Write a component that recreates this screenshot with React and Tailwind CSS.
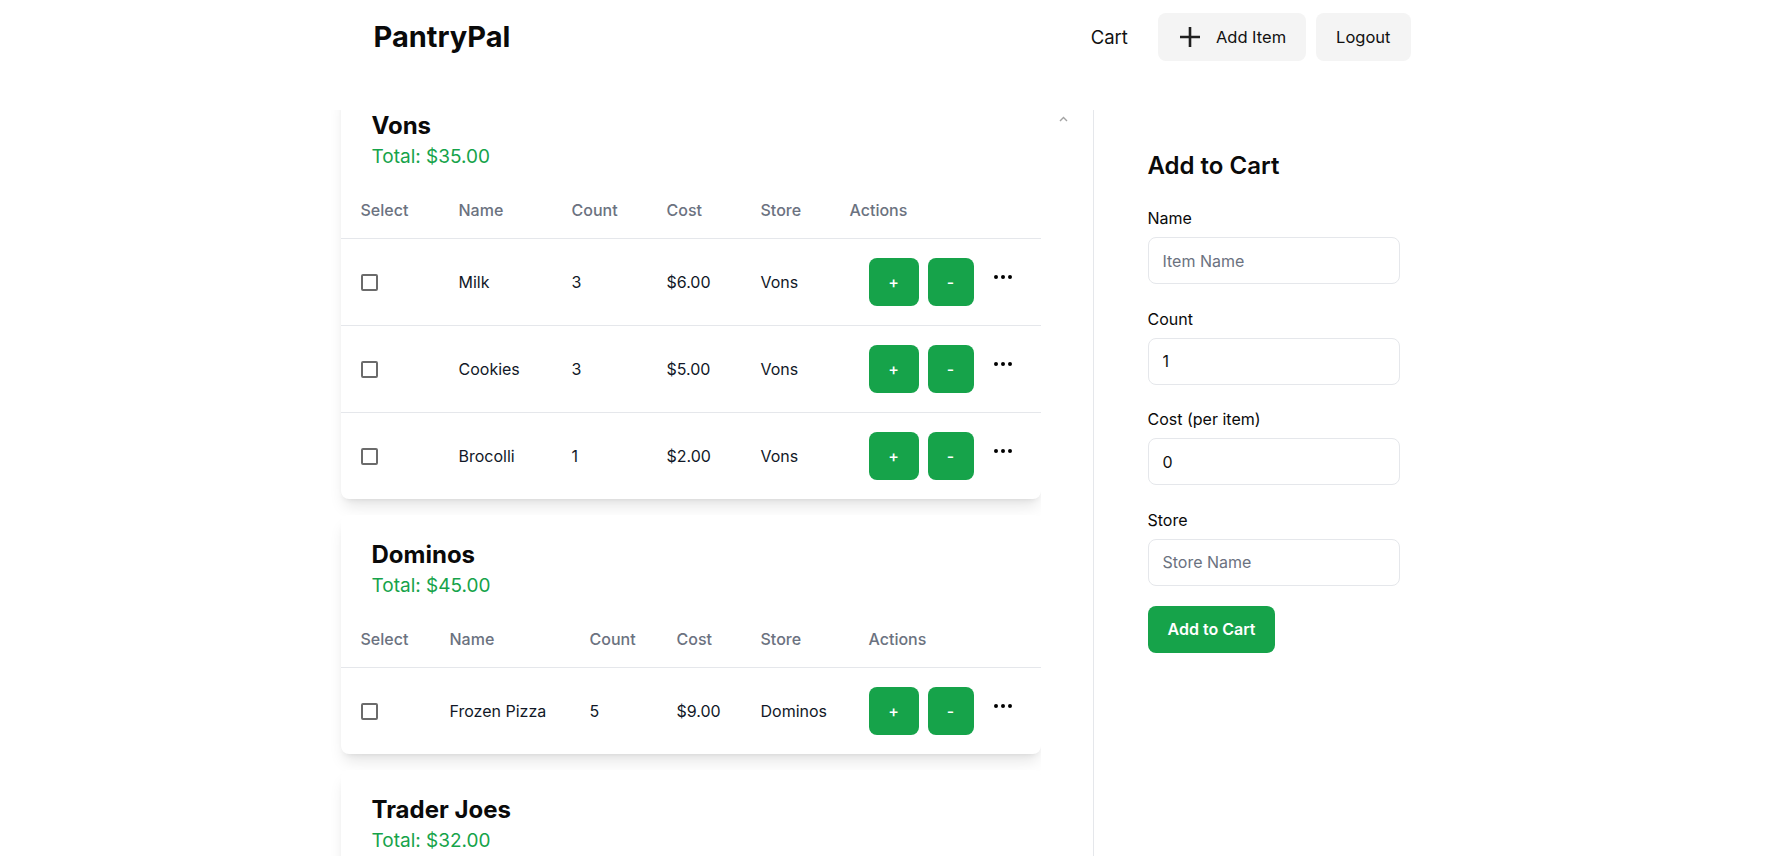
import React from "react";
import { Ellipsis } from "lucide-react";

const carts = [
    {
        store: "Vons",
        total: "35.00",
        cols: ["w-[98px]", "w-[113px]", "w-[95px]", "w-[94px]", "w-[89px]", "w-[211px]"],
        items: [
            { name: "Milk", count: 3, cost: "6.00", store: "Vons" },
            { name: "Cookies", count: 3, cost: "5.00", store: "Vons" },
            { name: "Brocolli", count: 1, cost: "2.00", store: "Vons" },
        ],
    },
    {
        store: "Dominos",
        total: "45.00",
        cols: ["w-[89px]", "w-[140px]", "w-[87px]", "w-[84px]", "w-[108px]", "w-[192px]"],
        items: [{ name: "Frozen Pizza", count: 5, cost: "9.00", store: "Dominos" }],
    },
    {
        store: "Trader Joes",
        total: "32.00",
        cols: ["w-[98px]", "w-[130px]", "w-[87px]", "w-[84px]", "w-[109px]", "w-[192px]"],
        items: [
            { name: "Bananas", count: 6, cost: "2.00", store: "Trader Joes" },
            { name: "Orange Juice", count: 2, cost: "10.00", store: "Trader Joes" },
        ],
    },
];

const headers = ["Select", "Name", "Count", "Cost", "Store", "Actions"];

const CartCard = ({ cart }) => {
    return (
        <div className="w-[700px] shrink-0 bg-white rounded-lg shadow-lg overflow-hidden pt-6">
            {/* Titre du magasin */}
            <div className="px-[31px]">
                <h2 className="text-2xl font-bold text-[#0a0a0a]">{cart.store}</h2>
                <p className="text-[19px] leading-7 mt-[1px] text-[#16a34a]">Total: ${cart.total}</p>
            </div>

            <table className="w-full table-fixed mt-[11px]">
                <colgroup>
                    {cart.cols.map((c, i) => (
                        <col key={i} className={c} />
                    ))}
                </colgroup>
                <thead>
                    <tr className="border-b border-[#e5e7eb]">
                        {headers.map((h) => (
                            <th key={h} className="px-5 py-4 text-left font-medium text-[#6b7280]">
                                {h}
                            </th>
                        ))}
                    </tr>
                </thead>
                <tbody>
                    {cart.items.map((item, i) => (
                        <tr
                            key={item.name}
                            className={i < cart.items.length - 1 ? "border-b border-[#e5e7eb]" : ""}
                        >
                            <td className="px-5 py-[19px] align-middle">
                                <input
                                    type="checkbox"
                                    className="appearance-none block w-[17px] h-[17px] border-2 border-[#6b6b6b] rounded-[2px] bg-white"
                                />
                            </td>
                            <td className="px-5 py-[19px] align-middle text-[#111827] whitespace-nowrap">{item.name}</td>
                            <td className="px-5 py-[19px] align-middle text-[#111827]">{item.count}</td>
                            <td className="px-5 py-[19px] align-middle text-[#111827]">${item.cost}</td>
                            <td className="px-5 py-[19px] align-middle text-[#111827] whitespace-nowrap">{item.store}</td>
                            <td className="px-5 py-[19px] align-middle">
                                <div className="flex items-center justify-end">
                                    <button className="h-12 w-[50px] rounded-lg bg-[#16a34a] text-white font-medium">+</button>
                                    <button className="h-12 w-[46px] ml-[9px] rounded-lg bg-[#16a34a] text-white font-medium">-</button>
                                    <button className="ml-[17px] mr-[6px] mb-[10px] text-black">
                                        <Ellipsis size={24} strokeWidth={2} />
                                    </button>
                                </div>
                            </td>
                        </tr>
                    ))}
                </tbody>
            </table>
        </div>
    );
};

const Field = ({ label, placeholder, value }) => (
    <div className="flex flex-col mb-[22.5px]">
        <label className="text-[#0a0a0a] mb-[7px]">{label}</label>
        <input
            className="w-[252px] h-[47px] px-[14px] rounded-lg border border-[#e5e7eb] text-[#111] placeholder:text-[#6b7280] outline-none"
            placeholder={placeholder}
            defaultValue={value}
        />
    </div>
);

export default function App() {
    return (
        <div className="h-screen overflow-hidden bg-white font-['Inter',sans-serif]">
            <div className="w-[1152px] mx-auto">
                {/* Header */}
                <nav className="flex items-center justify-between h-[74px] pl-[55px] pr-[60px]">
                    <h1 className="text-[29px] font-bold text-[#0a0a0a]">PantryPal</h1>
                    <div className="flex items-center gap-2.5">
                        <a className="px-5 py-3 text-[18.5px] leading-6 text-[#111]">Cart</a>
                        <button className="flex items-center gap-3.5 h-12 px-5 rounded-lg bg-[#f4f4f4] text-[16.5px] text-[#111]">
                            <svg width="24" height="24" viewBox="0 0 24 24" fill="none" stroke="#1f1f1f" strokeWidth="2.6">
                                <path d="M12 2v20M2 12h20" />
                            </svg>
                            <span>Add Item</span>
                        </button>
                        <button className="h-12 px-5 rounded-lg bg-[#f4f4f4] text-[16.5px] text-[#111]">Logout</button>
                    </div>
                </nav>

                {/* Contenu */}
                <div className="flex mt-[36px] h-[746px]">
                    <div className="w-[774px] flex h-full">
                        <div className="pl-[22px] h-full overflow-hidden">
                            <div className="flex flex-col gap-4 -mt-6 pb-10">
                                {carts.map((c) => (
                                    <CartCard key={c.store} cart={c} />
                                ))}
                            </div>
                        </div>
                        <div className="pl-[18px] pt-[6px]">
                            <svg width="9" height="6" viewBox="0 0 9 6" fill="none" stroke="#a3a3a3" strokeWidth="1.4">
                                <path d="M1 5l3.5-3.5L8 5" />
                            </svg>
                        </div>
                    </div>

                    <div className="flex-1 border-l border-[#e5e7eb] pl-[54px] pt-10">
                        <h2 className="text-2xl font-semibold text-[#0a0a0a] mb-6">Add to Cart</h2>
                        <Field label="Name" placeholder="Item Name" />
                        <Field label="Count" value="1" />
                        <Field label="Cost (per item)" value="0" />
                        <Field label="Store" placeholder="Store Name" />
                        <button className="-mt-[2.5px] h-[47px] px-5 rounded-lg bg-[#16a34a] text-white font-semibold">
                            Add to Cart
                        </button>
                    </div>
                </div>
            </div>
        </div>
    );
}
